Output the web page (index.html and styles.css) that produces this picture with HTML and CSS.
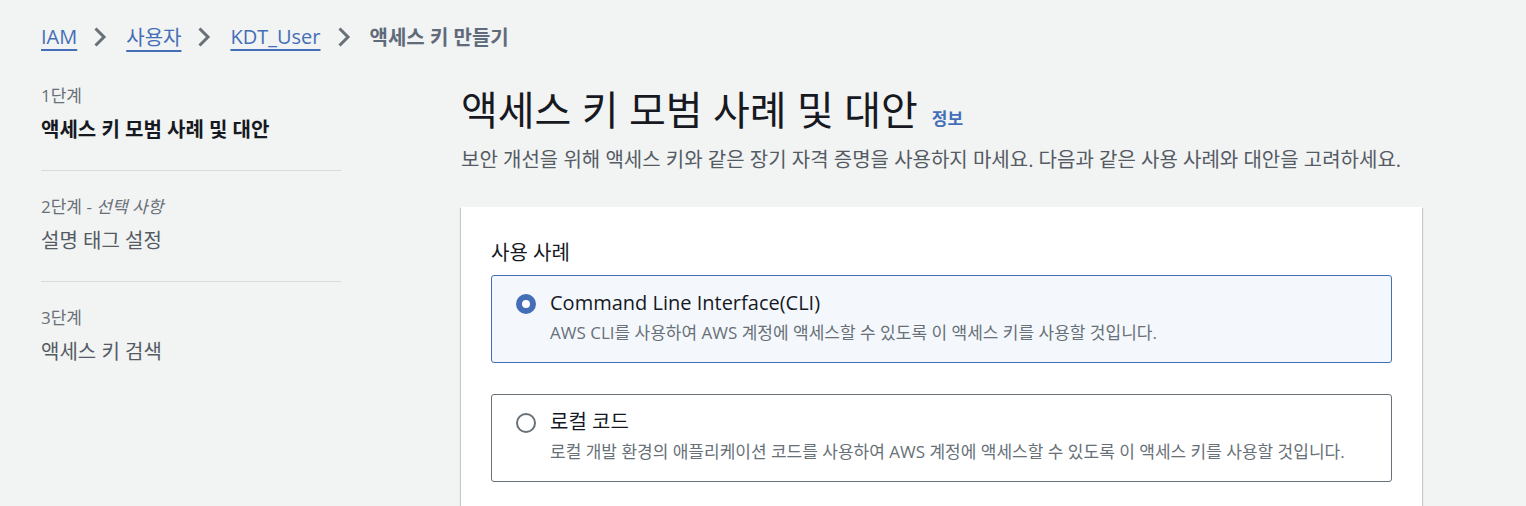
FILE: index.html
```html
<!DOCTYPE html>
<html lang="ko">
<head>
<meta charset="utf-8">
<title>액세스 키 만들기</title>
<link rel="stylesheet" href="styles.css">
</head>
<body>
<nav class="breadcrumbs">
  <a class="crumb" href="#">IAM</a>
  <svg class="chev" viewBox="0 0 14 22" width="14" height="22"><polyline points="2.5,2.5 11,11 2.5,19.5" fill="none" stroke="#687078" stroke-width="3" stroke-linejoin="miter"/></svg>
  <a class="crumb" href="#">사용자</a>
  <svg class="chev" viewBox="0 0 14 22" width="14" height="22"><polyline points="2.5,2.5 11,11 2.5,19.5" fill="none" stroke="#687078" stroke-width="3" stroke-linejoin="miter"/></svg>
  <a class="crumb" href="#">KDT_User</a>
  <svg class="chev" viewBox="0 0 14 22" width="14" height="22"><polyline points="2.5,2.5 11,11 2.5,19.5" fill="none" stroke="#687078" stroke-width="3" stroke-linejoin="miter"/></svg>
  <span class="crumb-current">액세스 키 만들기</span>
</nav>
<div class="layout">
  <aside class="steps">
    <div class="step">
      <div class="step-num">1단계</div>
      <div class="step-title active">액세스 키 모범 사례 및 대안</div>
    </div>
    <div class="step">
      <div class="step-num">2단계 - <i>선택 사항</i></div>
      <div class="step-title">설명 태그 설정</div>
    </div>
    <div class="step">
      <div class="step-num">3단계</div>
      <div class="step-title">액세스 키 검색</div>
    </div>
  </aside>
  <main class="main">
    <header class="page-head">
      <h1 class="title">액세스 키 모범 사례 및 대안 <a class="info" href="#">정보</a></h1>
      <p class="desc">보안 개선을 위해 액세스 키와 같은 장기 자격 증명을 사용하지 마세요. 다음과 같은 사용 사례와 대안을 고려하세요.</p>
    </header>
    <section class="card">
      <div class="field-label">사용 사례</div>
      <div class="tiles">
        <label class="tile selected">
          <span class="radio checked"></span>
          <span class="tile-text">
            <span class="tile-title">Command Line Interface(CLI)</span>
            <span class="tile-desc">AWS CLI를 사용하여 AWS 계정에 액세스할 수 있도록 이 액세스 키를 사용할 것입니다.</span>
          </span>
        </label>
        <label class="tile">
          <span class="radio"></span>
          <span class="tile-text">
            <span class="tile-title">로컬 코드</span>
            <span class="tile-desc">로컬 개발 환경의 애플리케이션 코드를 사용하여 AWS 계정에 액세스할 수 있도록 이 액세스 키를 사용할 것입니다.</span>
          </span>
        </label>
      </div>
    </section>
  </main>
</div>
</body>
</html>
```
FILE: styles.css
```css
* { box-sizing: border-box; }
html, body { margin: 0; padding: 0; }
body {
  background: #f2f3f3;
  font-family: "Open Sans", "Noto Sans CJK KR", sans-serif;
  color: #16191f;
  width: 1526px;
  height: 506px;
  overflow: hidden;
}
.breadcrumbs {
  display: flex;
  align-items: center;
  padding: 17px 0 0 41px;
  height: 56px;
  font-size: 20px;
}
.crumb {
  color: #446fb7;
  text-decoration: underline;
  text-decoration-thickness: 2px;
  text-underline-offset: 5px;
}
.chev { margin: 0 19px 0 16px; }
.crumb-current { color: #5f6b7a; font-weight: 600; }
.layout {
  display: flex;
  padding-left: 41px;
}
.steps {
  width: 300px;
  flex: none;
  padding-top: 28px;
}
.step {
  padding-bottom: 26px;
  border-bottom: 1px solid #d5dbdb;
  margin-bottom: 24px;
}
.step:last-child { border-bottom: none; }
.step-num {
  font-size: 17px;
  color: #687078;
  line-height: 24px;
}
.step-num i { font-style: italic; }
.step-title {
  font-size: 20px;
  color: #545b64;
  line-height: 28px;
  margin-top: 8px;
}
.step-title.active { color: #16191f; font-weight: 700; }
.main {
  margin-left: 120px;
  width: 961px;
}
.page-head { padding-top: 28px; }
.title {
  margin: 0;
  font-size: 40px;
  font-weight: 400;
  line-height: 52px;
  display: flex;
  align-items: baseline;
}
.info {
  font-size: 17px;
  font-weight: 700;
  color: #446fb7;
  text-decoration: none;
  margin-left: 14px;
}
.desc {
  margin: 1px 0 0;
  font-size: 20px;
  color: #545b64;
  line-height: 28px;
}
.card {
  margin-top: 33px;
  background: #fff;
  box-shadow: 0 1px 1px 0 rgba(0,28,36,.3), 1px 1px 1px 0 rgba(0,28,36,.15), -1px 1px 1px 0 rgba(0,28,36,.15);
  padding: 32px 30px 0;
  height: 299px;
}
.field-label {
  font-size: 20px;
  line-height: 28px;
  margin-bottom: 8px;
}
.tiles { display: flex; flex-direction: column; gap: 31px; }
.tile {
  display: flex;
  align-items: flex-start;
  height: 88px;
  border: 1px solid #687078;
  border-radius: 3px;
  padding: 13px 24px;
  width: 901px;
}
.tile.selected { border-color: #446fb7; background: #f4f8fd; }
.radio {
  flex: none;
  width: 20px;
  height: 20px;
  border-radius: 50%;
  border: 2px solid #687078;
  margin-top: 5px;
  margin-right: 14px;
}
.radio.checked {
  border: 6px solid #446fb7;
  background: #fff;
}
.tile-text { display: flex; flex-direction: column; }
.tile-title { font-size: 20px; line-height: 28px; color: #16191f; }
.tile-desc { font-size: 17px; line-height: 24px; color: #687078; margin-top: 4px; }
```
